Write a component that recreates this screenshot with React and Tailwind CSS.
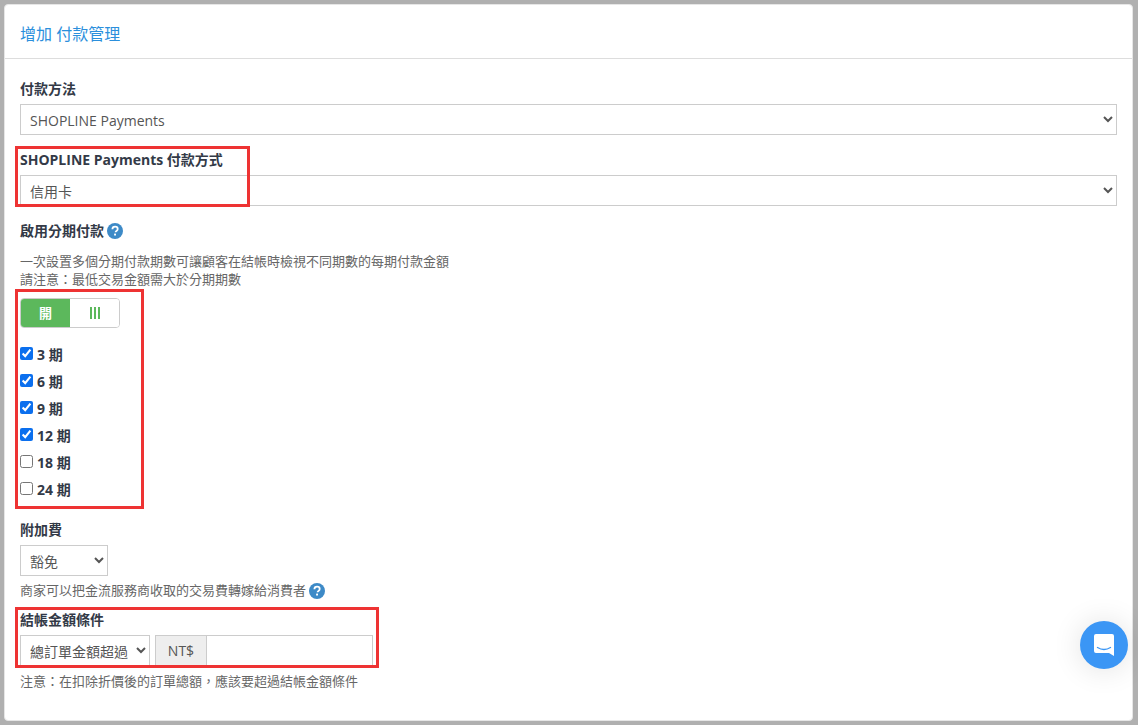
function HelpIcon({ className }) {
  return (
    <svg className={className} viewBox="0 0 16 16" width="16" height="16">
      <circle cx="8" cy="8" r="8" fill="#3d8ac7" />
      <path d="M5.4 6.2c0-1.5 1.1-2.5 2.7-2.5s2.6.9 2.6 2.2c0 1-.5 1.5-1.3 2.1-.6.4-.8.7-.8 1.3" fill="none" stroke="#fff" strokeWidth="1.8" />
      <rect x="7.1" y="10.6" width="1.9" height="1.9" fill="#fff" />
    </svg>
  );
}

function Check({ label, checked }) {
  return (
    <label className="flex items-center h-[27px] text-[14px] font-bold text-[#333a47]">
      <input type="checkbox" defaultChecked={checked} className="w-[13px] h-[13px] m-0 mr-[4px] accent-[#0b6fee] -translate-y-[1px]" />
      <span>{label}</span>
    </label>
  );
}

const fieldSelect = "block h-[31px] border border-[#ccc] bg-white pl-[5px] pr-[1px] pt-[2px] text-[14px] text-[#555] rounded-none outline-none";

export default function App() {
  return (
    <div
      className="relative w-[1138px] h-[725px] overflow-hidden bg-[#b0b0b0] pt-[4px] pl-[4px] pr-[5px] pb-[4px] text-[14px]"
      style={{ fontFamily: '"Open Sans","Noto Sans CJK TC",sans-serif' }}
    >
      <div className="h-full bg-white rounded-[4px] border border-[#e6e6e6] flex flex-col">
        <div className="h-[54px] shrink-0 border-b border-[#ddd] pl-[15px] pt-[4px] flex items-center">
          <h1 className="text-[16px] font-normal text-[#2b8fdc]">增加 付款管理</h1>
        </div>
        <div className="pl-[15px] pr-[15px] pt-[20px]">
          <div className="h-[25px] font-bold text-[#333a47] leading-[20px]">付款方法</div>
          <select className={`${fieldSelect} w-[1097px]`} defaultValue="a">
            <option value="a">SHOPLINE Payments</option>
          </select>
          <div className="mt-[15px] h-[25px] font-bold text-[#333a47] leading-[20px]">SHOPLINE Payments 付款方式</div>
          <select className={`${fieldSelect} w-[1097px]`} defaultValue="a">
            <option value="a">信用卡</option>
          </select>
          <div className="mt-[15px] h-[20px] flex items-center gap-[3px] font-bold text-[#333a47]">
            <span className="-translate-y-[1px]">啟用分期付款</span>
            <HelpIcon />
          </div>
          <p className="mt-[11px] text-[13px] leading-[18px] text-[#666]">
            一次設置多個分期付款期數可讓顧客在結帳時檢視不同期數的每期付款金額
            <br />
            請注意：最低交易金額需大於分期期數
          </p>
          <div className="mt-[10px] w-[100px] h-[30px] flex border border-[#ccc] rounded-[4px] overflow-hidden text-[13px] font-bold">
            <div className="w-[49px] bg-[#5cb85c] text-white pt-[2px] flex items-center justify-center">開</div>
            <div className="flex-1 bg-white pb-[1px] flex items-center justify-center">
              <span className="flex gap-[2px]">
                <span className="w-[2px] h-[12px] bg-[#5cb85c]" />
                <span className="w-[2px] h-[12px] bg-[#5cb85c]" />
                <span className="w-[2px] h-[12px] bg-[#5cb85c]" />
              </span>
            </div>
          </div>
          <div className="mt-[13px]">
            <Check label="3 期" checked />
            <Check label="6 期" checked />
            <Check label="9 期" checked />
            <Check label="12 期" checked />
            <Check label="18 期" />
            <Check label="24 期" />
          </div>
          <div className="mt-[17px] h-[25px] font-bold text-[#333a47] leading-[20px]">附加費</div>
          <select className={`${fieldSelect} w-[88px]`} defaultValue="a">
            <option value="a">豁免</option>
          </select>
          <div className="mt-[5px] h-[20px] flex items-center gap-[3px] text-[13px] text-[#666]">
            <span>商家可以把金流服務商收取的交易費轉嫁給消費者</span>
            <HelpIcon />
          </div>
          <div className="mt-[9px] h-[25px] font-bold text-[#333a47] leading-[20px]">結帳金額條件</div>
          <div className="flex gap-[5px]">
            <select className={`${fieldSelect} w-[130px]`} defaultValue="a">
              <option value="a">總訂單金額超過</option>
            </select>
            <div className="flex w-[218px] h-[31px] border border-[#ccc]">
              <span className="w-[51px] bg-[#eee] border-r border-[#ccc] flex items-center justify-center text-[#555]">NT$</span>
              <input className="flex-1 min-w-0 outline-none" />
            </div>
          </div>
          <p className="mt-[6px] text-[13px] leading-[18px] text-[#666]">注意：在扣除折價後的訂單總額，應該要超過結帳金額條件</p>
        </div>
      </div>

      <div className="absolute left-[15px] top-[146px] w-[235px] h-[61px] border-[3px] border-[#ee3333]" />
      <div className="absolute left-[15px] top-[289px] w-[129px] h-[220px] border-[3px] border-[#ee3333]" />
      <div className="absolute left-[15px] top-[607px] w-[364px] h-[61px] border-[3px] border-[#ee3333]" />

      <div className="absolute left-[1080px] top-[621px] w-[48px] h-[48px] rounded-full bg-[#3b96f5] shadow-[0_1px_30px_rgba(0,0,0,0.12)] flex items-center justify-center">
        <svg width="22" height="24" viewBox="0 0 22 24">
          <path d="M3 1h16a2 2 0 0 1 2 2v20l-5-3H3a2 2 0 0 1-2-2V3a2 2 0 0 1 2-2z" fill="#fff" />
          <path d="M4.5 14.5c4 2.4 9 2.4 13 0" fill="none" stroke="#3b96f5" strokeWidth="1.4" strokeLinecap="round" />
        </svg>
      </div>
    </div>
  );
}
